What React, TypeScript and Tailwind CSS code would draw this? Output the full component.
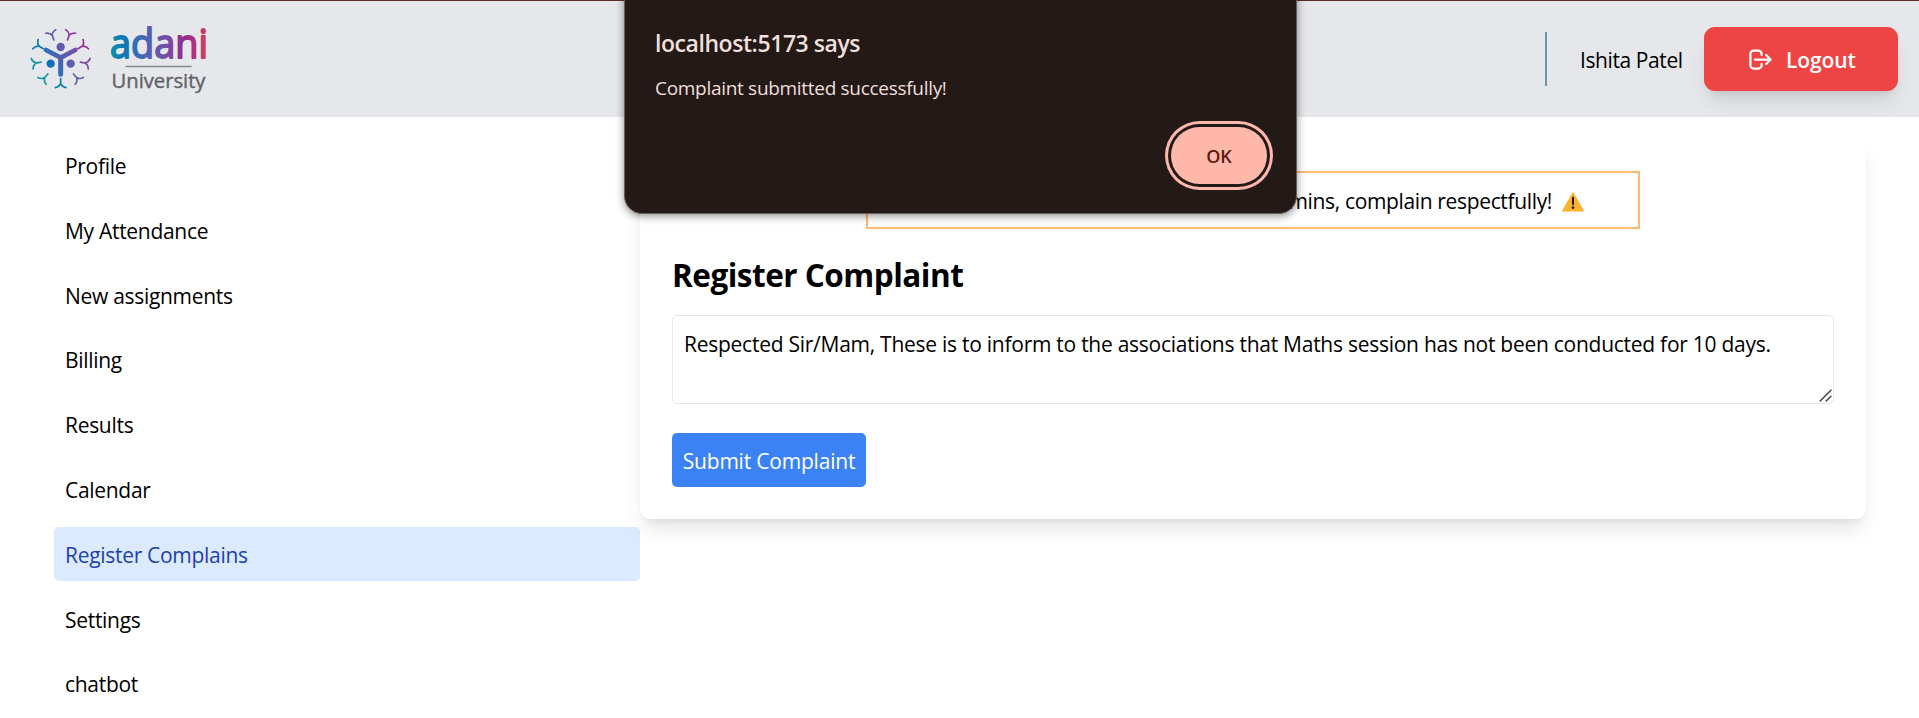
import React from "react";

const navItems = [
  "Profile",
  "My Attendance",
  "New assignments",
  "Billing",
  "Results",
  "Calendar",
  "Register Complains",
  "Settings",
  "chatbot",
];

const figures = [
  { angle: 0, color: "#0a80b9" },
  { angle: 40, color: "#1398a4" },
  { angle: 80, color: "#1690a0" },
  { angle: 120, color: "#0b74b8" },
  { angle: 160, color: "#665cac" },
  { angle: 200, color: "#8d3a9c" },
  { angle: 240, color: "#942c92" },
  { angle: 280, color: "#7d4aa6" },
  { angle: 320, color: "#5b62b3" },
];

function Emblem() {
  return (
    <svg width="70" height="70" viewBox="0 0 210 210" fill="none">
      <defs>
        <linearGradient id="arms" x1="60" y1="0" x2="155" y2="0" gradientUnits="userSpaceOnUse">
          <stop offset="0" stopColor="#2c6db8" />
          <stop offset="0.5" stopColor="#5360b0" />
          <stop offset="1" stopColor="#7650a8" />
        </linearGradient>
        <linearGradient id="stem" x1="0" y1="95" x2="0" y2="160" gradientUnits="userSpaceOnUse">
          <stop offset="0" stopColor="#5a5cae" />
          <stop offset="1" stopColor="#2a72bd" />
        </linearGradient>
      </defs>
      <path d="M63 81 L107 104 L151 81" stroke="url(#arms)" strokeWidth="14" strokeLinecap="round" strokeLinejoin="round" />
      <path d="M99.5 100 H114.5 V154 A7.5 7.5 0 0 1 99.5 154 Z" fill="url(#stem)" />
      <circle cx="107" cy="72" r="12.5" fill="#6358ab" />
      <circle cx="77" cy="122" r="12.5" fill="#0f72b8" />
      <circle cx="137" cy="122" r="12.5" fill="#5d60b2" />
      {figures.map((f) => (
        <path
          key={f.angle}
          d="M107 167 V183 M91 194 Q104 191 107 181 Q110 191 123 194"
          stroke={f.color}
          strokeWidth="5"
          strokeLinecap="round"
          transform={`rotate(${f.angle} 107 107)`}
        />
      ))}
    </svg>
  );
}

function Wordmark() {
  return (
    <svg width="105" height="80" viewBox="0 -4 105 80" className="overflow-visible">
      <defs>
        <linearGradient id="word" x1="6" y1="0" x2="101" y2="0" gradientUnits="userSpaceOnUse">
          <stop offset="0" stopColor="#0f8fa8" />
          <stop offset="0.14" stopColor="#0a78b8" />
          <stop offset="0.35" stopColor="#4a66b3" />
          <stop offset="0.6" stopColor="#7a4aa3" />
          <stop offset="0.78" stopColor="#932b90" />
          <stop offset="0.97" stopColor="#c63d62" />
        </linearGradient>
      </defs>
      <text
        x="5"
        y="36"
        textLength="98"
        lengthAdjust="spacingAndGlyphs"
        className="font-['Open_Sans',sans-serif] text-[41px] font-medium"
        fill="url(#word)"
        stroke="url(#word)"
        strokeWidth="1.8"
        strokeLinejoin="round"
      >
        adani
      </text>
      <path d="M20.5 44.5 H86.5" stroke="#85888c" strokeWidth="1.3" />
      <text
        x="6.5"
        y="65.5"
        textLength="94"
        lengthAdjust="spacingAndGlyphs"
        className="font-['Open_Sans',sans-serif] text-[19.5px] font-medium"
        fill="#626467"
        stroke="#626467"
        strokeWidth="0.4"
      >
        University
      </text>
    </svg>
  );
}

function LogoutIcon() {
  return (
    <svg
      width="27"
      height="27"
      viewBox="0 0 24 24"
      fill="none"
      stroke="currentColor"
      strokeWidth="2"
      strokeLinecap="round"
      strokeLinejoin="round"
    >
      <path d="M17 16l4-4m0 0l-4-4m4 4H7m6 4v1a3 3 0 01-3 3H6a3 3 0 01-3-3V7a3 3 0 013-3h4a3 3 0 013 3v1" />
    </svg>
  );
}

function WarningIcon() {
  return (
    <svg width="22" height="20" viewBox="0 0 22 20" className="mt-[4px] shrink-0">
      <path d="M11 1 L21.2 18.9 H0.8 Z" fill="#ffb02e" stroke="#ffb02e" strokeWidth="1.4" strokeLinejoin="round" />
      <path d="M11 5.6 V12.2" stroke="#1c1c1c" strokeWidth="2" strokeLinecap="round" />
      <circle cx="11" cy="15.6" r="1.3" fill="#1c1c1c" />
    </svg>
  );
}

function Header() {
  return (
    <header className="flex h-[117px] items-center justify-between border-t border-[#5a2f2b] bg-[#e5e7eb] pr-[21px]">
      <div className="flex items-center pl-[25px]">
        <div className="-mt-[2px]">
          <Emblem />
        </div>
        <div className="-mt-[2px] ml-[10px]">
          <Wordmark />
        </div>
      </div>
      <div className="flex items-center">
        <div className="h-[54px] border-l-2 border-[#6f95ac]" />
        <span className="ml-[33px] w-[124px] pt-[2px] tracking-[-0.4px] whitespace-nowrap">Ishita Patel</span>
        <button className="flex h-16 w-[194px] items-center rounded-[11px] bg-[#ef4444] pl-[43px] font-semibold text-white shadow-[0_13.5px_20px_-4px_rgba(0,0,0,0.1),0_5.4px_8px_-5.4px_rgba(0,0,0,0.1)]">
          <LogoutIcon />
          <span className="ml-[12px] pt-[2px] tracking-[-0.1px]">Logout</span>
        </button>
      </div>
    </header>
  );
}

function AlertDialog() {
  return (
    <div className="absolute -top-5 left-[624px] flex h-[234px] w-[673px] flex-col rounded-[18px] border border-[#6b5f5c] bg-[#231a18] px-[30px] pt-[46px] shadow-[0_2px_8px_rgba(0,0,0,0.45)]">
      <h2 className="text-[23px] leading-8 font-semibold tracking-[-0.44px] text-[#f1dfda]">localhost:5173 says</h2>
      <p className="mt-[15px] text-[19px] leading-7 tracking-[-0.3px] text-[#f1dfda]">Complaint submitted successfully!</p>
      <button className="mt-[25px] -mr-[1px] flex h-[57px] w-24 items-center justify-center self-end rounded-full bg-[#ffb8aa] text-[18px] font-semibold text-[#5d1a12] shadow-[0_0_0_3px_#231a18,0_0_0_6px_#ffb8aa]">
        OK
      </button>
    </div>
  );
}

export default function App() {
  return (
    <div className="relative h-[718px] w-full overflow-hidden bg-white font-['Open_Sans','Noto_Sans',sans-serif] text-[21px] leading-[32px] text-black">
      <Header />
      <div className="flex items-start pt-[21px]">
        <nav className="flex w-[640px] flex-col gap-[10.8px] pl-[54px]">
          {navItems.map((item) => (
            <a
              key={item}
              className={
                item === "Register Complains"
                  ? "flex h-[54px] items-center rounded-[5px] bg-[#dbeafe] pt-[2px] pl-[11px] tracking-[-0.3px] text-[#1e40af]"
                  : "flex h-[54px] items-center rounded-[5px] pt-[2px] pl-[11px] tracking-[-0.3px]"
              }
            >
              {item}
            </a>
          ))}
        </nav>
        <main className="relative h-[381px] w-[1226px] rounded-[11px] bg-white px-8 pt-[33px] shadow-[0_13.5px_20px_-4px_rgba(0,0,0,0.1),0_5.4px_8px_-5.4px_rgba(0,0,0,0.1)]">
          <div className="mx-auto flex h-[58px] w-[774px] items-center justify-end gap-[10px] border-2 border-[#fdba74] pr-[54px]">
            <span className="pt-[2px] tracking-[-0.35px] whitespace-nowrap">Respect all admins, complain respectfully!</span>
            <WarningIcon />
          </div>
          <h1 className="mt-[24px] text-[31.5px] leading-[43px] font-bold tracking-[-0.5px]">Register Complaint</h1>
          <div className="relative mt-[19px] h-[89px]">
            <textarea
              className="block h-[89px] w-full resize-none rounded-[5px] border border-[#e5e7eb] bg-white px-[11px] pt-[12px] tracking-[-0.26px] outline-none"
              defaultValue="Respected Sir/Mam, These is to inform to the associations that Maths session has not been conducted for 10 days."
            />
            <svg className="absolute right-[2px] bottom-[2px]" width="13" height="13" viewBox="0 0 13 13">
              <path d="M0.8 12.4 L12.4 0.8 M6.8 12.4 L12.4 6.8" stroke="#4d4d4d" strokeWidth="1.5" />
            </svg>
          </div>
          <button className="mt-[29px] flex h-[54px] w-[194px] items-center justify-center rounded-[5px] bg-[#3b82f6] pt-[2px] tracking-[-0.2px] whitespace-nowrap text-white">
            Submit Complaint
          </button>
        </main>
      </div>
      <AlertDialog />
    </div>
  );
}
